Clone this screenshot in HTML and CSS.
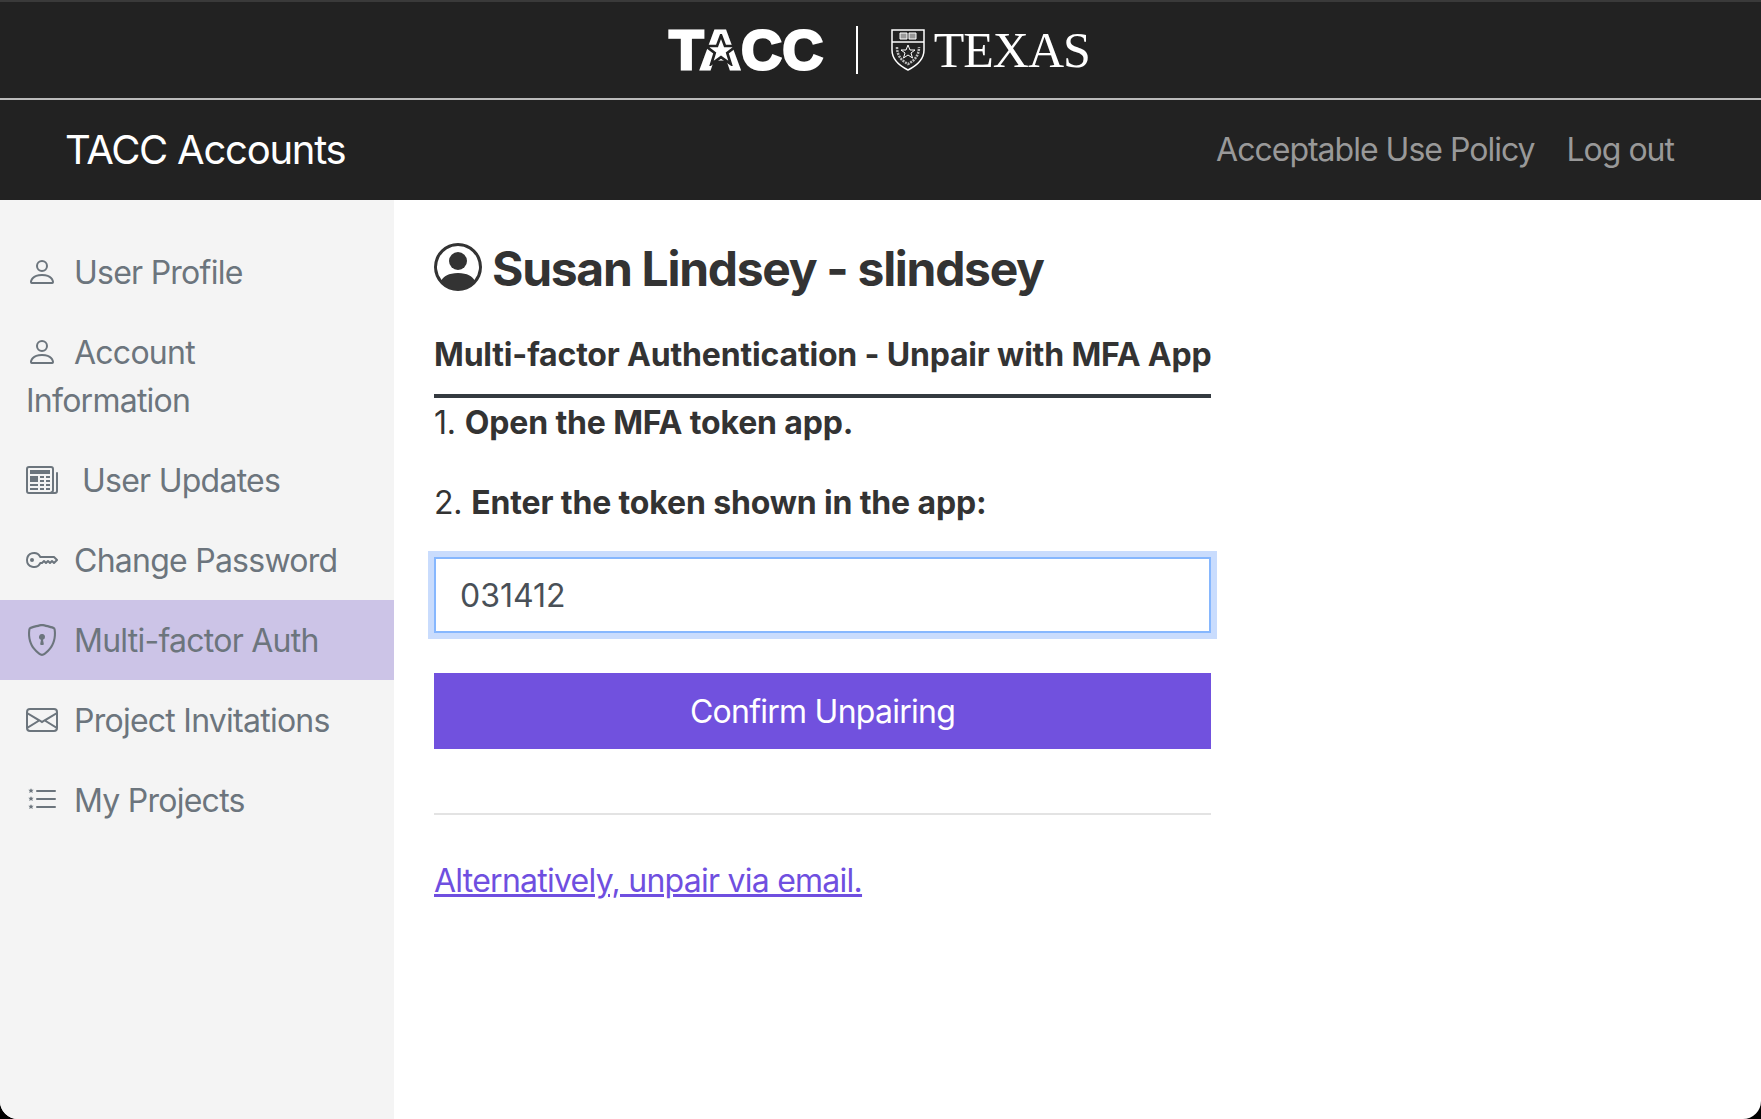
FILE: index.html
```html
<!DOCTYPE html>
<html lang="en">
<head>
    <meta charset="UTF-8">
    <meta name="viewport" content="width=device-width, initial-scale=1.0">
    <title>TACC Accounts</title>
    <link rel="stylesheet" href="styles.css">
</head>
<body>
    <div class="page">
        <header class="brand-bar">
            <div class="tacc-logo">
                <span class="tacc-word">TACC</span>
                <svg class="tacc-star" viewBox="0 0 24 24"><path d="M12 1l3 8h8.500l-6.800 5.200 2.600 8.300-7.300-5.100-7.300 5.100 2.600-8.300L0.500 9H9z" fill="#fff" stroke="#222" stroke-width="2"/></svg>
            </div>
            <div class="brand-sep"></div>
            <svg class="ut-shield" viewBox="0 0 34 42">
                <path d="M1 1h32v20c0 10-8 16-16 20C9 37 1 31 1 21z" fill="#222" stroke="#fff" stroke-width="1.500"/>
                <path d="M1 13h32" stroke="#fff" stroke-width="1.500"/>
                <path d="M9 4h7v6H9zM18 4h7v6h-7z" fill="#999" stroke="#fff" stroke-width="1"/>
                <path d="M17 16l2 5h5l-4 3 1.500 5-4.500-3-4.500 3 1.500-5-4-3h5z" fill="#222" stroke="#fff" stroke-width="1"/>
                <path d="M6 18c0 9 5 14 11 17 6-3 11-8 11-17" fill="none" stroke="#bbb" stroke-width="2.500" stroke-dasharray="2 1"/>
            </svg>
            <span class="texas-word">TEXAS</span>
        </header>
        <nav class="top-nav">
            <a class="nav-title" href="#">TACC Accounts</a>
            <div class="nav-links">
                <a href="#">Acceptable Use Policy</a>
                <a href="#">Log out</a>
            </div>
        </nav>
        <div class="layout">
            <aside class="sidebar">
                <a class="side-item" href="#">
                    <svg class="side-icon" viewBox="0 0 16 16"><path d="M8 8a3 3 0 1 0 0-6 3 3 0 0 0 0 6Zm2-3a2 2 0 1 1-4 0 2 2 0 0 1 4 0Zm4 8c0 1-1 1-1 1H3s-1 0-1-1 1-4 6-4 6 3 6 4Zm-1-.004c-.001-.246-.154-.986-.832-1.664C11.516 10.680 10.289 10 8 10c-2.290 0-3.516.680-4.168 1.332-.678.678-.830 1.418-.832 1.664h10Z"/></svg>User Profile
                </a>
                <a class="side-item" href="#">
                    <svg class="side-icon" viewBox="0 0 16 16"><path d="M8 8a3 3 0 1 0 0-6 3 3 0 0 0 0 6Zm2-3a2 2 0 1 1-4 0 2 2 0 0 1 4 0Zm4 8c0 1-1 1-1 1H3s-1 0-1-1 1-4 6-4 6 3 6 4Zm-1-.004c-.001-.246-.154-.986-.832-1.664C11.516 10.680 10.289 10 8 10c-2.290 0-3.516.680-4.168 1.332-.678.678-.830 1.418-.832 1.664h10Z"/></svg>Account Information
                </a>
                <a class="side-item" href="#">
                    <svg class="side-icon wide" viewBox="0 0 16 16"><path d="M0 2.500A1.500 1.500 0 0 1 1.500 1h11A1.500 1.500 0 0 1 14 2.500v10.528c0 .300-.050.654-.238.972h.738a.500.500 0 0 0 .500-.500v-9a.500.500 0 0 1 1 0v9a1.500 1.500 0 0 1-1.500 1.500H1.497A1.497 1.497 0 0 1 0 13.500v-11zM12 14c.370 0 .654-.211.853-.441.092-.106.147-.279.147-.531V2.500a.500.500 0 0 0-.500-.500h-11a.500.500 0 0 0-.500.500v11c0 .278.223.500.497.500H12z"/><path d="M2 3h10v2H2V3zm0 3h4v3H2V6zm0 4h4v1H2v-1zm0 2h4v1H2v-1zm5-6h2v1H7V6zm3 0h2v1h-2V6zM7 8h2v1H7V8zm3 0h2v1h-2V8zm-3 2h2v1H7v-1zm3 0h2v1h-2v-1zm-3 2h2v1H7v-1zm3 0h2v1h-2v-1z"/></svg>User Updates
                </a>
                <a class="side-item" href="#">
                    <svg class="side-icon" viewBox="0 0 16 16"><path d="M0 8a4 4 0 0 1 7.465-2H14a.500.500 0 0 1 .354.146l1.500 1.500a.500.500 0 0 1 0 .708l-1.500 1.500a.500.500 0 0 1-.708 0L13 9.207l-.646.647a.500.500 0 0 1-.708 0L11 9.207l-.646.647a.500.500 0 0 1-.708 0L9 9.207l-.646.647A.500.500 0 0 1 8 10h-.535A4 4 0 0 1 0 8zm4-3a3 3 0 1 0 2.712 4.285A.500.500 0 0 1 7.163 9h.630l.853-.854a.500.500 0 0 1 .708 0l.646.647.646-.647a.500.500 0 0 1 .708 0l.646.647.646-.647a.500.500 0 0 1 .708 0l.646.647.793-.793-1-1h-6.630a.500.500 0 0 1-.451-.285A3 3 0 0 0 4 5z"/><path d="M4 8a1 1 0 1 1-2 0 1 1 0 0 1 2 0z"/></svg>Change Password
                </a>
                <a class="side-item active" href="#">
                    <svg class="side-icon" viewBox="0 0 16 16"><path d="M5.338 1.590a61.440 61.440 0 0 0-2.837.856.481.481 0 0 0-.328.390c-.554 4.157.726 7.190 2.253 9.188a10.725 10.725 0 0 0 2.287 2.233c.346.244.652.420.893.533.120.057.218.095.293.118a.550.550 0 0 0 .101.025.615.615 0 0 0 .100-.025c.076-.023.174-.061.294-.118.240-.113.547-.290.893-.533a10.726 10.726 0 0 0 2.287-2.233c1.527-1.997 2.807-5.031 2.253-9.188a.480.480 0 0 0-.328-.390c-.651-.213-1.750-.560-2.837-.855C9.552 1.290 8.531 1.067 8 1.067c-.530 0-1.552.223-2.662.524zM5.072.560C6.157.265 7.310 0 8 0s1.843.265 2.928.560c1.110.300 2.229.655 2.887.870a1.540 1.540 0 0 1 1.044 1.262c.596 4.477-.787 7.795-2.465 9.990a11.775 11.775 0 0 1-2.517 2.453 7.159 7.159 0 0 1-1.048.625c-.280.132-.581.240-.829.240s-.548-.108-.829-.240a7.158 7.158 0 0 1-1.048-.625 11.777 11.777 0 0 1-2.517-2.453C1.928 10.487.545 7.169 1.141 2.692A1.540 1.540 0 0 1 2.185 1.430 62.456 62.456 0 0 1 5.072.560z"/><path d="M9.500 6.500a1.500 1.500 0 0 1-1 1.415l.385 1.990a.500.500 0 0 1-.491.595h-.788a.500.500 0 0 1-.490-.595l.384-1.990a1.500 1.500 0 1 1 2-1.415z"/></svg>Multi-factor Auth
                </a>
                <a class="side-item" href="#">
                    <svg class="side-icon" viewBox="0 0 16 16"><path d="M0 4a2 2 0 0 1 2-2h12a2 2 0 0 1 2 2v8a2 2 0 0 1-2 2H2a2 2 0 0 1-2-2V4Zm2-1a1 1 0 0 0-1 1v.217l7 4.200 7-4.200V4a1 1 0 0 0-1-1H2Zm13 2.383-4.708 2.825L15 11.105V5.383Zm-.034 6.876-5.640-3.471L8 9.583l-1.326-.795-5.640 3.470A1 1 0 0 0 2 13h12a1 1 0 0 0 .966-.741ZM1 11.105l4.708-2.897L1 5.383v5.722Z"/></svg>Project Invitations
                </a>
                <a class="side-item" href="#">
                    <svg class="side-icon" viewBox="0 0 16 16"><path d="M5 11.500a.500.500 0 0 1 .500-.500h9a.500.500 0 0 1 0 1h-9a.500.500 0 0 1-.500-.500zm0-4a.500.500 0 0 1 .500-.500h9a.500.500 0 0 1 0 1h-9a.500.500 0 0 1-.500-.500zm0-4a.500.500 0 0 1 .500-.500h9a.500.500 0 0 1 0 1h-9a.500.500 0 0 1-.500-.500z"/><path d="M2.500 2.100l.42 .82h.9l-.7 .62.26 .92-.88-.5-.88 .5.26-.92-.7-.62h.9z"/><path d="M2.500 6.100l.42 .82h.9l-.7 .62.26 .92-.88-.5-.88 .5.26-.92-.7-.62h.9z"/><path d="M2.500 10.100l.42 .82h.9l-.7 .62.26 .92-.88-.5-.88 .5.26-.92-.7-.62h.9z"/></svg>My Projects
                </a>
            </aside>
            <main class="content">
                <h1 class="user-name">
                    <svg class="user-icon" viewBox="0 0 16 16"><path d="M11 6a3 3 0 1 1-6 0 3 3 0 0 1 6 0z"/><path fill-rule="evenodd" d="M0 8a8 8 0 1 1 16 0A8 8 0 0 1 0 8zm8-7a7 7 0 0 0-5.468 11.370C3.242 11.226 4.805 10 8 10s4.757 1.225 5.468 2.370A7 7 0 0 0 8 1z"/></svg>
                    Susan Lindsey - slindsey
                </h1>
                <div class="panel">
                    <h2 class="panel-title">Multi-factor Authentication - Unpair with MFA App</h2>
                    <p class="step">1. <b>Open the MFA token app.</b></p>
                    <p class="step">2. <b>Enter the token shown in the app:</b></p>
                    <input class="token-input" type="text" value="031412">
                    <button class="confirm-btn">Confirm Unpairing</button>
                    <hr class="divider">
                    <a class="alt-link" href="#">Alternatively, unpair via email.</a>
                </div>
            </main>
        </div>
    </div>
</body>
</html>
```

FILE: styles.css
```css
html {
    background-color: #000;
}
body {
    margin: 0;
    font-family: Inter, "Noto Sans", sans-serif;
    font-size: 32px;
    line-height: 48px;
    letter-spacing: -0.75px;
    color: #333;
}
a {
    text-decoration: none;
}
.page {
    height: 1119px;
    display: flex;
    flex-direction: column;
    background-color: #fff;
    border-radius: 0 0 18px 18px;
    overflow: hidden;
}
.brand-bar {
    height: 96px;
    border-top: 2px solid #3a3a3a;
    border-bottom: 2px solid #bbb;
    background-color: #222;
    display: flex;
    align-items: center;
    justify-content: center;
    padding-right: 2px;
}
.tacc-logo {
    position: relative;
    margin-right: 32px;
}
.tacc-word {
    font-family: "Liberation Sans", sans-serif;
    font-weight: bold;
    font-size: 56px;
    line-height: 60px;
    letter-spacing: 0.8px;
    color: #fff;
    -webkit-text-stroke: 3px #fff;
    display: block;
}
.tacc-star {
    position: absolute;
    left: 36px;
    top: 14px;
    width: 32px;
    height: 32px;
}
.brand-sep {
    width: 2px;
    height: 48px;
    background-color: #fff;
    margin-right: 33px;
}
.ut-shield {
    width: 34px;
    height: 42px;
    margin-right: 9px;
}
.texas-word {
    font-family: "Liberation Serif", serif;
    font-size: 50px;
    line-height: 60px;
    letter-spacing: -1px;
    color: #fff;
}
.top-nav {
    height: 100px;
    flex-shrink: 0;
    background-color: #222;
    display: flex;
    align-items: center;
    justify-content: space-between;
    padding: 0 87px 0 65px;
}
.nav-title {
    color: #fff;
    font-size: 40px;
    letter-spacing: -1.25px;
}
.nav-links {
    display: flex;
    gap: 32px;
    letter-spacing: -1px;
}
.nav-links a {
    color: #999;
}
.layout {
    flex: 1;
    display: flex;
}
.sidebar {
    width: 394px;
    flex-shrink: 0;
    padding-top: 32px;
    background-color: #f4f4f4;
}
.side-item {
    display: block;
    padding: 17px 40px 15px 26px;
    color: #6c757d;
}
.side-item.active {
    background-color: #ccc4e7;
}
.side-icon {
    width: 32px;
    height: 32px;
    margin-right: 16px;
    vertical-align: -4px;
    fill: #6c757d;
}
.side-icon.wide {
    margin-right: 24px;
}
.content {
    flex: 1;
    padding: 37px 40px;
}
.user-name {
    margin: 0;
    font-size: 48px;
    line-height: 64px;
    font-weight: 700;
    letter-spacing: -1.3px;
}
.user-icon {
    width: 48px;
    height: 48px;
    vertical-align: -5px;
    fill: #333;
}
.panel {
    width: 777px;
    margin-top: 30px;
}
.panel-title {
    margin: 0;
    padding-bottom: 15px;
    border-bottom: 4px solid #343a40;
    font-size: 32px;
    line-height: 48px;
    font-weight: 700;
    letter-spacing: -0.18px;
    white-space: nowrap;
}
.step {
    margin: 1px 0 32px;
    letter-spacing: -0.15px;
}
.token-input {
    display: block;
    box-sizing: border-box;
    width: 100%;
    height: 76px;
    margin-top: -2px;
    padding: 0 24px;
    border: 2px solid #86b7fe;
    border-radius: 0;
    outline: 0;
    box-shadow: 0 0 0 6px #c9dcfd;
    font-family: inherit;
    font-size: 32px;
    color: #495057;
}
.confirm-btn {
    display: block;
    width: 100%;
    height: 76px;
    margin-top: 40px;
    border: 0;
    background-color: #7151de;
    color: #fff;
    font-family: inherit;
    font-size: 32px;
    letter-spacing: -0.75px;
}
.divider {
    margin: 64px 0 42px;
    border: 0;
    border-top: 2px solid #e3e3e3;
}
.alt-link {
    color: #6f4fe0;
    text-decoration: underline;
}
```
